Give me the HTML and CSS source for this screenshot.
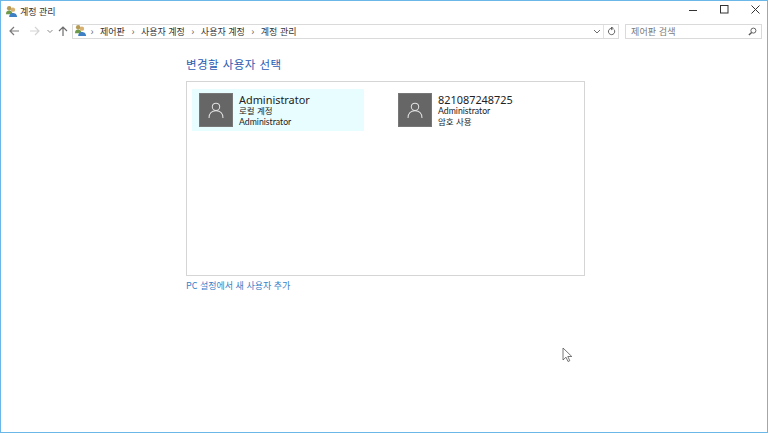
FILE: index.html
```html
<!DOCTYPE html>
<html lang="ko">
<head>
<meta charset="utf-8">
<title>계정 관리</title>
<link rel="stylesheet" href="styles.css">
</head>
<body>
<div class="window">
  <header class="titlebar">
    <svg class="icon16" viewBox="0 0 14 14"><circle cx="4.5" cy="3.5" r="2.4" fill="#b59a55"/><path d="M1 10c0-3 1.500-4 3.500-4S8 7 8 10z" fill="#6f9a4a"/><circle cx="8.500" cy="5" r="2.400" fill="#d8b070"/><path d="M4.500 13c0-3.500 2-4.500 4-4.500s4.500 1 4.500 4.500z" fill="#3f7fc4"/></svg>
    <span class="title">계정 관리</span>
    <div class="winbtns">
      <svg class="winbtn" viewBox="0 0 9 9"><path d="M0 5.500h8" stroke="#333" fill="none"/></svg>
      <svg class="winbtn" viewBox="0 0 9 9"><rect x=".5" y=".5" width="7.500" height="7.500" stroke="#333" fill="none"/></svg>
      <svg class="winbtn" viewBox="0 0 9 9"><path d="M.5.5l8 8M8.500.5l-8 8" stroke="#333" fill="none"/></svg>
    </div>
  </header>
  <nav class="navbar">
    <svg class="navbtn" viewBox="0 0 12 12"><path d="M11 6H2M6 2L2 6l4 4" stroke="#7a7a7a" stroke-width="1.200" fill="none"/></svg>
    <svg class="navbtn" viewBox="0 0 12 12"><path d="M1 6h9M6 2l4 4-4 4" stroke="#d4d4d4" stroke-width="1.200" fill="none"/></svg>
    <svg class="navdrop" viewBox="0 0 8 8"><path d="M1.500 3L4 5.500 6.500 3" stroke="#8a8a8a" fill="none"/></svg>
    <svg class="navup" viewBox="0 0 12 12"><path d="M6 11V2M2 6l4-4 4 4" stroke="#6d6d6d" stroke-width="1.200" fill="none"/></svg>
    <div class="address">
      <svg class="icon16 addr-icon" viewBox="0 0 14 14"><circle cx="4.500" cy="3.500" r="2.400" fill="#b59a55"/><path d="M1 10c0-3 1.500-4 3.500-4S8 7 8 10z" fill="#6f9a4a"/><circle cx="8.500" cy="5" r="2.400" fill="#d8b070"/><path d="M4.500 13c0-3.500 2-4.500 4-4.500s4.500 1 4.500 4.500z" fill="#3f7fc4"/></svg>
      <span class="sep">›</span><span class="crumb">제어판</span>
      <span class="sep">›</span><span class="crumb">사용자 계정</span>
      <span class="sep">›</span><span class="crumb">사용자 계정</span>
      <span class="sep">›</span><span class="crumb">계정 관리</span>
      <svg class="addr-drop" viewBox="0 0 8 8"><path d="M1 3l3 3 3-3" stroke="#6d6d6d" fill="none"/></svg>
      <span class="refresh"><svg viewBox="0 0 10 10"><path d="M7.800 2.800A3.500 3.500 0 1 1 5 1.500M5 0v3l2-1.500z" stroke="#555" fill="none"/></svg></span>
    </div>
    <div class="search">
      <span class="search-text">제어판 검색</span>
      <svg class="search-icon" viewBox="0 0 10 10"><circle cx="6" cy="4" r="2.800" stroke="#555" fill="none"/><path d="M4 6L1 9" stroke="#555" stroke-width="1.500"/></svg>
    </div>
  </nav>
  <main class="content">
    <h1 class="heading">변경할 사용자 선택</h1>
    <section class="panel">
      <div class="account selected">
        <div class="tile"><svg viewBox="0 0 16 16"><circle cx="8" cy="5.200" r="3.300" stroke="#e4e4e4" stroke-width=".9" fill="none"/><path d="M1.800 15c0-3.800 2.400-6.400 6.200-6.400s6.200 2.600 6.200 6.400" stroke="#e4e4e4" stroke-width=".9" fill="none"/></svg></div>
        <div class="info"><div class="name">Administrator</div><div class="sub">로컬 계정</div><div class="sub latin">Administrator</div></div>
      </div>
      <div class="account">
        <div class="tile"><svg viewBox="0 0 16 16"><circle cx="8" cy="5.200" r="3.300" stroke="#e4e4e4" stroke-width=".9" fill="none"/><path d="M1.800 15c0-3.800 2.400-6.400 6.200-6.400s6.200 2.600 6.200 6.400" stroke="#e4e4e4" stroke-width=".9" fill="none"/></svg></div>
        <div class="info"><div class="name">821087248725</div><div class="sub latin">Administrator</div><div class="sub">암호 사용</div></div>
      </div>
    </section>
    <a class="link">PC 설정에서 새 사용자 추가</a>
  </main>
  <svg class="cursor" viewBox="0 0 11 16"><path d="M1 1v12l3-2.800 2 4.300 1.800-.8-2-4.200h4z" fill="#fff" stroke="#555" stroke-width=".8"/></svg>
</div>
</body>
</html>
```
FILE: styles.css
```css
* { box-sizing: border-box; }
html, body { margin: 0; padding: 0; width: 768px; height: 433px; overflow: hidden; background: #fff; }
body { font-family: "Noto Sans CJK KR", "Noto Sans", sans-serif; color: #1a1a1a; }
svg { display: block; }
.window { position: relative; width: 768px; height: 433px; border: 1px solid #6ab7e8; background: #fff; display: flex; flex-direction: column; }
.titlebar { height: 20px; display: flex; align-items: center; padding-left: 4px; flex: none; }
.icon16 { width: 13px; height: 13px; flex: none; }
.title { margin-left: 2px; font-size: 9px; color: #333; }
.winbtns { margin-left: auto; display: flex; gap: 22px; padding-right: 7px; margin-top: -3px; }
.winbtn { width: 9px; height: 9px; }
.navbar { height: 20px; display: flex; align-items: center; flex: none; padding: 0 5px 0 7px; }
.navbtn { width: 12px; height: 12px; margin-right: 9px; }
.navdrop { width: 8px; height: 8px; margin-left: -4px; }
.navup { width: 12px; height: 12px; margin-left: 3px; }
.address { margin-left: 3px; width: 547px; height: 15px; border: 1px solid #dadada; display: flex; align-items: center; padding-left: 1px; font-size: 9px; color: #333; }
.addr-icon { margin-top: -1px; margin-right: -3px; }
.sep { margin: 0 6.500px; color: #666; font-size: 10px; line-height: 1; }
.crumb { white-space: nowrap; }
.addr-drop { width: 8px; height: 8px; margin-left: auto; margin-right: 2px; }
.refresh { width: 15px; height: 13px; border-left: 1px solid #e2e2e2; display: flex; align-items: center; justify-content: center; }
.refresh svg { width: 9px; height: 9px; }
.search { margin-left: 6px; width: 137px; height: 15px; border: 1px solid #dadada; display: flex; align-items: center; justify-content: space-between; padding: 0 4px 0 5px; font-size: 9px; color: #7a7a7a; }
.search-text { letter-spacing: .1px; }
.search-icon { width: 9px; height: 9px; }
.content { flex: 1; padding: 15px 0 0 185px; }
.heading { margin: 0; font-size: 11.500px; line-height: 16px; font-weight: 400; color: #2a5cb4; letter-spacing: .45px; }
.panel { width: 399px; height: 195px; margin-top: 9px; border: 1px solid #d5d5d5; padding: 7px 5px; display: flex; gap: 27px; align-items: flex-start; }
.account { width: 172px; height: 42px; display: flex; align-items: center; padding-left: 7px; gap: 6px; }
.selected { background: #e8fdff; }
.tile { width: 34px; height: 34px; background: #666; border: 1px solid #777; display: flex; align-items: center; justify-content: center; }
.tile svg { width: 18px; height: 18px; }
.info { display: flex; flex-direction: column; padding-top: 1px; }
.name { font-family: "Noto Sans", sans-serif; font-size: 10.900px; line-height: 11px; color: #222; }
.sub { font-size: 8.500px; line-height: 11px; color: #222; }
.latin { font-family: Lato, "Noto Sans", sans-serif; font-size: 8.700px; }
.link { display: block; margin-top: 3px; font-size: 9px; line-height: 13px; color: #3a80c8; }
.cursor { position: absolute; left: 561px; top: 346px; width: 11px; height: 16px; }
```
